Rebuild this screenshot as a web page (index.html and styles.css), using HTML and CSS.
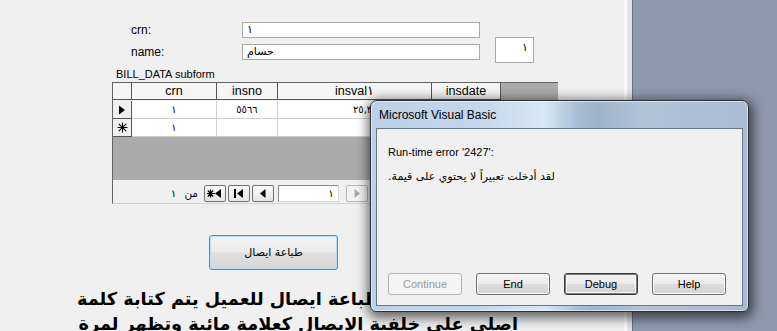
FILE: index.html
```html
<!DOCTYPE html>
<html>
<head>
<meta charset="utf-8">
<title>BILL form</title>
<link rel="stylesheet" href="styles.css">
</head>
<body>
<div class="screen">
  <div class="form">
    <div class="fields">
      <div class="field-col">
        <div class="field"><span class="lbl">crn:</span><div class="tb">١</div></div>
        <div class="field"><span class="lbl">name:</span><div class="tb">حسام</div></div>
      </div>
      <div class="smallbox">١</div>
    </div>
    <div class="sublabel">BILL_DATA subform</div>
    <div class="subform">
      <div class="grid">
        <div class="cell hd"></div>
        <div class="cell hd">crn</div>
        <div class="cell hd">insno</div>
        <div class="cell hd">insval١</div>
        <div class="cell hd">insdate</div>
        <div class="cell gr"></div>

        <div class="cell sel">
          <svg width="8" height="10" viewBox="0 0 8 10"><path d="M1 0.5 L7 5 L1 9.5 Z" fill="#000"/></svg>
        </div>
        <div class="cell">١</div>
        <div class="cell">٥٥٦٦</div>
        <div class="cell num">٢٥,٣٠٠</div>
        <div class="cell"></div>
        <div class="cell gr"></div>

        <div class="cell sel">
          <svg width="11" height="11" viewBox="0 0 11 11"><path d="M5.5 0.5 V10.5 M0.5 5.5 H10.5 M1.8 1.8 L9.2 9.2 M9.2 1.8 L1.8 9.2" stroke="#000" stroke-width="1.1" fill="none"/></svg>
        </div>
        <div class="cell">١</div>
        <div class="cell"></div>
        <div class="cell"></div>
        <div class="cell"></div>
        <div class="cell gr"></div>
      </div>
      <div class="empty"></div>
      <div class="nav">
        <div class="navlbl"><span>١</span><span>من</span></div>
        <span class="nb">
          <svg width="18" height="13" viewBox="0 0 18 13"><path d="M4.5 2.5 V10.5 M1 6.5 H9 M1.8 3.5 L7.2 9.5 M7.2 3.5 L1.8 9.5" stroke="#000" stroke-width="1.2" fill="none"/><path d="M9 6.5 L15 2 V11 Z" fill="#000"/></svg>
        </span>
        <span class="nb">
          <svg width="18" height="13" viewBox="0 0 18 13"><rect x="4" y="2" width="2" height="9" fill="#000"/><path d="M7 6.5 L13 2 V11 Z" fill="#000"/></svg>
        </span>
        <span class="nb">
          <svg width="18" height="13" viewBox="0 0 18 13"><path d="M6 6.5 L11.5 2 V11 Z" fill="#000"/></svg>
        </span>
        <div class="navtb">١</div>
        <span class="nb next">
          <svg width="18" height="13" viewBox="0 0 18 13"><path d="M12 6.5 L6.5 2 V11 Z" fill="#a8a8a8"/></svg>
        </span>
      </div>
    </div>
    <div class="printrow"><button class="printbtn">طباعة ايصال</button></div>
    <div class="bigtext" dir="rtl">
      <div class="line first">عند طباعة ايصال للعميل يتم كتابة كلمة</div>
      <div class="line">اصلي على خلفية الايصال كعلامة مائية وتظهر لمرة</div>
    </div>
  </div>
  <div class="strip"></div>
  <div class="desk"></div>

  <div class="dialog">
    <div class="dlg-title">Microsoft Visual Basic</div>
    <div class="dlg-client">
      <div class="dlg-err">Run-time error '2427':</div>
      <div class="dlg-msg" dir="rtl">لقد أدخلت تعبيراً لا يحتوي على قيمة.</div>
      <div class="dlg-btns">
        <button class="wbtn disabled">Continue</button>
        <button class="wbtn">End</button>
        <button class="wbtn default">Debug</button>
        <button class="wbtn">Help</button>
      </div>
    </div>
  </div>
</div>
</body>
</html>
```

FILE: styles.css
```css
* { box-sizing: border-box; }
html, body { margin: 0; padding: 0; }
body {
  width: 777px;
  height: 331px;
  overflow: hidden;
  background: #f0f0f0;
  font-family: "Liberation Sans", "DejaVu Sans", sans-serif;
  font-size: 12px;
  color: #000;
}
.screen {
  position: relative;
  display: flex;
  width: 777px;
  height: 331px;
  overflow: hidden;
}
.form {
  width: 624px;
  flex: none;
  display: flex;
  flex-direction: column;
  padding-top: 22px;
}
.fields { display: flex; margin-left: 131px; }
.field-col { display: flex; flex-direction: column; gap: 6px; }
.field { display: flex; height: 16px; align-items: center; }
.lbl { width: 111px; line-height: 16px; font-size: 12px; }
.tb {
  width: 238px;
  height: 16px;
  border: 1px solid #a9a9a9;
  background: #fff;
  line-height: 14px;
  padding-left: 4px;
  font-family: "DejaVu Sans", sans-serif;
  font-size: 11px;
}
.smallbox {
  margin-left: 15px;
  margin-top: 15px;
  width: 39px;
  height: 26px;
  border: 1px solid #a9a9a9;
  background: #fff;
  text-align: right;
  padding: 3px 5px 0 0;
  line-height: 14px;
  font-family: "DejaVu Sans", sans-serif;
  font-size: 11px;
}
.sublabel { margin: 4px 0 1px 116px; font-size: 11px; line-height: 14px; }
.subform { margin-left: 112px; width: 446px; }
.grid {
  display: grid;
  grid-template-columns: 19px 85px 61px 154px 69px 57px;
  border-left: 1px solid #646464;
  border-top: 1px solid #646464;
}
.cell {
  height: 18px;
  border-right: 1px solid #cfcfcf;
  border-bottom: 1px solid #cfcfcf;
  background: #fff;
  text-align: center;
  line-height: 17px;
  font-family: "DejaVu Sans", sans-serif;
  font-size: 10px;
  overflow: hidden;
  white-space: nowrap;
}
.cell.hd {
  height: 17px;
  background: #f5f5f5;
  border-right-color: #555;
  border-bottom-color: #555;
  line-height: 16px;
  font-family: "Liberation Sans", sans-serif;
  font-size: 12.5px;
}
.cell.sel {
  background: #f0f0f0;
  border-right-color: #555;
  border-bottom-color: #555;
  display: flex;
  align-items: center;
  justify-content: center;
}
.cell.num { text-align: right; padding-right: 48px; }
.cell.gr { background: #ababab; border: none; }
.empty { height: 43px; background: #ababab; border-left: 1px solid #646464; }
.nav {
  height: 24px;
  display: flex;
  align-items: flex-start;
  gap: 2px;
  padding-top: 5px;
  background: #f0f0f0;
  border-left: 1px solid #646464;
  border-bottom: 1px solid #d4d4d4;
}
.navlbl {
  width: 89px;
  display: flex;
  justify-content: flex-end;
  gap: 8px;
  padding-right: 4px;
  line-height: 16px;
  font-family: "DejaVu Sans", sans-serif;
  font-size: 10.5px;
}
.nb {
  width: 22px;
  height: 17px;
  border: 1px solid #707070;
  border-radius: 2px;
  background: linear-gradient(#fbfbfb, #e4e4e4);
  display: flex;
  align-items: center;
  justify-content: center;
}
.nb.next { margin-left: 5px; border-color: #b8b8b8; background: #f2f2f2; }
.navtb {
  margin-left: 2px;
  width: 61px;
  height: 17px;
  border: 1px solid #8a8a8a;
  border-right-color: #d8d8d8;
  border-bottom-color: #d8d8d8;
  background: #fff;
  text-align: right;
  padding-right: 4px;
  line-height: 15px;
  font-family: "DejaVu Sans", sans-serif;
  font-size: 10.5px;
}
.printrow { margin: 31px 0 0 209px; }
.printbtn {
  display: block;
  width: 129px;
  height: 35px;
  border: 1px solid #3c8fd4;
  border-radius: 3px;
  box-shadow: inset 0 0 0 1px #b5e0fa;
  background: linear-gradient(#f4f4f4 0%, #ececec 48%, #dedede 52%, #d6d6d6 100%);
  font-family: "DejaVu Sans", sans-serif;
  font-size: 11px;
  color: #000;
  padding: 0;
}
.bigtext {
  margin: 17px 0 0 72px;
  width: 446px;
  text-align: right;
  font-family: "DejaVu Sans", sans-serif;
  font-weight: bold;
  font-size: 17.7px;
  line-height: 25px;
  white-space: nowrap;
}
.line.first { text-align: left; padding-left: 5px; }
.strip {
  width: 8px;
  flex: none;
  background: linear-gradient(90deg, #fdfdfd 0, #fafafa 3px, #e6e6e6 3px, #e2e2e2 100%);
}
.desk {
  flex: 1;
  background: #8f99ae;
  border-left: 1px solid #6a7182;
}
.dialog {
  position: absolute;
  left: 370px;
  top: 100px;
  width: 379px;
  height: 212px;
  display: flex;
  flex-direction: column;
  padding: 0 5px 5px 5px;
  border: 1px solid #2a3038;
  border-radius: 7px 7px 6px 6px;
  background: linear-gradient(90deg, #bcd0e6 0%, #c4d6ea 28%, #d8e7f5 46%, #a7bdd6 55%, #9fb4cc 60%, #b1c3d7 72%, #a9bbd0 100%);
  box-shadow: inset 0 0 0 1px rgba(255,255,255,0.55), 1px 3px 12px 3px rgba(0,0,0,0.6);
}
.dlg-title {
  height: 27px;
  padding: 7px 0 0 3px;
  font-family: "Liberation Sans", sans-serif;
  font-size: 12px;
  line-height: 14px;
  color: #000;
}
.dlg-client {
  flex: 1;
  display: flex;
  flex-direction: column;
  border: 1px solid #66778d;
  background: #f0f0f0;
  padding: 16px 11px 10px 11px;
}
.dlg-err {
  font-family: "Liberation Sans", sans-serif;
  font-size: 11px;
  line-height: 14px;
}
.dlg-msg {
  margin-top: 11px;
  text-align: left;
  font-family: "DejaVu Sans", sans-serif;
  font-size: 11px;
  line-height: 14px;
}
.dlg-btns { margin-top: auto; display: flex; gap: 14px; }
.wbtn {
  width: 74px;
  height: 22px;
  padding: 0;
  border: 1px solid #707070;
  border-radius: 3px;
  box-shadow: inset 0 0 0 1px #fbfbfb;
  background: linear-gradient(#f2f2f2 0%, #ebebeb 50%, #dddddd 50%, #d4d4d4 100%);
  font-family: "Liberation Sans", sans-serif;
  font-size: 11px;
  color: #000;
}
.wbtn.disabled { border-color: #adb2b5; background: #f4f4f4; color: #9a9a9a; box-shadow: none; }
.wbtn.default { border-color: #3a3a3a; box-shadow: inset 0 0 0 1px #7a7a7a, inset 0 0 0 2px #f8f8f8; }
```
